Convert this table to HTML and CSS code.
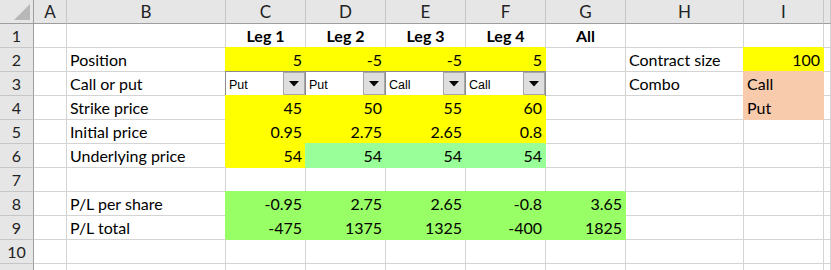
FILE: index.html
```html
<!DOCTYPE html>
<html>
<head>
<meta charset="utf-8">
<link rel="stylesheet" href="styles.css">
</head>
<body>
<div class="sheet">
  <!-- header row -->
  <div class="c corner"><svg width="16" height="16" viewBox="0 0 16 16"><polygon points="16,0 16,16 0,16" fill="#b8b8b8"/></svg></div>
  <div class="c hd">A</div><div class="c hd">B</div><div class="c hd">C</div><div class="c hd">D</div><div class="c hd">E</div><div class="c hd">F</div><div class="c hd">G</div><div class="c hd">H</div><div class="c hd">I</div><div class="c hd"></div>

  <!-- 1 -->
  <div class="c rh">1</div><div class="c"></div><div class="c"></div>
  <div class="c b">Leg 1</div><div class="c b">Leg 2</div><div class="c b">Leg 3</div><div class="c b">Leg 4</div><div class="c b">All</div>
  <div class="c"></div><div class="c"></div><div class="c"></div>

  <!-- 2 -->
  <div class="c rh">2</div><div class="c"></div><div class="c">Position</div>
  <div class="c r y">5</div><div class="c r y">-5</div><div class="c r y">-5</div><div class="c r y">5</div><div class="c"></div>
  <div class="c">Contract size</div><div class="c r y">100</div><div class="c"></div>

  <!-- 3 -->
  <div class="c rh">3</div><div class="c"></div><div class="c">Call or put</div>
  <div class="c dd-cell"><div class="dd"><span class="dd-text">Put</span><span class="dd-btn"><svg width="10" height="6" viewBox="0 0 10 6"><polygon points="0,0 10,0 5,5.5" fill="#000"/></svg></span></div></div>
  <div class="c dd-cell"><div class="dd"><span class="dd-text">Put</span><span class="dd-btn"><svg width="10" height="6" viewBox="0 0 10 6"><polygon points="0,0 10,0 5,5.5" fill="#000"/></svg></span></div></div>
  <div class="c dd-cell"><div class="dd"><span class="dd-text">Call</span><span class="dd-btn"><svg width="10" height="6" viewBox="0 0 10 6"><polygon points="0,0 10,0 5,5.5" fill="#000"/></svg></span></div></div>
  <div class="c dd-cell"><div class="dd"><span class="dd-text">Call</span><span class="dd-btn"><svg width="10" height="6" viewBox="0 0 10 6"><polygon points="0,0 10,0 5,5.5" fill="#000"/></svg></span></div></div>
  <div class="c"></div>
  <div class="c">Combo</div><div class="c s">Call</div><div class="c"></div>

  <!-- 4 -->
  <div class="c rh">4</div><div class="c"></div><div class="c">Strike price</div>
  <div class="c r y">45</div><div class="c r y">50</div><div class="c r y">55</div><div class="c r y">60</div><div class="c"></div>
  <div class="c"></div><div class="c s">Put</div><div class="c"></div>

  <!-- 5 -->
  <div class="c rh">5</div><div class="c"></div><div class="c">Initial price</div>
  <div class="c r y">0.95</div><div class="c r y">2.75</div><div class="c r y">2.65</div><div class="c r y">0.8</div><div class="c"></div>
  <div class="c"></div><div class="c"></div><div class="c"></div>

  <!-- 6 -->
  <div class="c rh">6</div><div class="c"></div><div class="c">Underlying price</div>
  <div class="c r y">54</div><div class="c r g">54</div><div class="c r g">54</div><div class="c r g">54</div><div class="c"></div>
  <div class="c"></div><div class="c"></div><div class="c"></div>

  <!-- 7 -->
  <div class="c rh">7</div><div class="c"></div><div class="c"></div>
  <div class="c"></div><div class="c"></div><div class="c"></div><div class="c"></div><div class="c"></div>
  <div class="c"></div><div class="c"></div><div class="c"></div>

  <!-- 8 -->
  <div class="c rh">8</div><div class="c"></div><div class="c">P/L per share</div>
  <div class="c r pl">-0.95</div><div class="c r pl">2.75</div><div class="c r pl">2.65</div><div class="c r pl">-0.8</div><div class="c r pl">3.65</div>
  <div class="c"></div><div class="c"></div><div class="c"></div>

  <!-- 9 -->
  <div class="c rh">9</div><div class="c"></div><div class="c">P/L total</div>
  <div class="c r pl">-475</div><div class="c r pl">1375</div><div class="c r pl">1325</div><div class="c r pl">-400</div><div class="c r pl">1825</div>
  <div class="c"></div><div class="c"></div><div class="c"></div>

  <!-- 10 -->
  <div class="c rh">10</div><div class="c"></div><div class="c"></div>
  <div class="c"></div><div class="c"></div><div class="c"></div><div class="c"></div><div class="c"></div>
  <div class="c"></div><div class="c"></div><div class="c"></div>

  <!-- 11 (partially visible) -->
  <div class="c rh"></div><div class="c"></div><div class="c"></div>
  <div class="c"></div><div class="c"></div><div class="c"></div><div class="c"></div><div class="c"></div>
  <div class="c"></div><div class="c"></div><div class="c"></div>
</div>
</body>
</html>
```
FILE: styles.css
```css
html, body {
  margin: 0;
  padding: 0;
  background: #fff;
}
body {
  font-family: Lato, "Open Sans", "Liberation Sans", sans-serif;
  font-size: 16px;
  color: #000;
  overflow: hidden;
  height: 270px;
}
.sheet {
  display: grid;
  grid-template-columns: 34px 33px 159px 80px 80px 80px 80px 80px 118px 80px 1fr;
  grid-auto-rows: 24px;
  width: 831px;
}
.c {
  box-sizing: border-box;
  border-right: 1px solid #d4d4d4;
  border-bottom: 1px solid #d4d4d4;
  padding: 0 3px 2px 3px;
  display: flex;
  align-items: flex-end;
  white-space: nowrap;
  overflow: hidden;
  line-height: 18px;
}
.hd {
  background: #e6e6e6;
  border-right-color: #c6c6c6;
  border-bottom-color: #9e9e9e;
  justify-content: center;
  align-items: center;
  padding: 0;
  font-size: 17px;
  color: #222;
}
.corner {
  background: #e6e6e6;
  border-right-color: #9e9e9e;
  border-bottom-color: #9e9e9e;
  padding: 0 3px 3px 0;
  justify-content: flex-end;
  align-items: flex-end;
}
.corner svg {
  display: block;
}
.rh {
  background: #e6e6e6;
  border-right-color: #9e9e9e;
  border-bottom-color: #c6c6c6;
  justify-content: center;
  align-items: center;
  padding: 0;
  font-size: 16px;
  color: #222;
}
.r { justify-content: flex-end; }
.b { justify-content: center; font-weight: bold; }
.y  { background: #ffff00; border-color: #ffff00; box-shadow: -1px -1px 0 #ffff00; }
.g  { background: #99ff99; border-color: #99ff99; box-shadow: -1px -1px 0 #99ff99; }
.pl { background: #99ff66; border-color: #99ff66; box-shadow: -1px -1px 0 #99ff66; }
.s  { background: #f8cbad; border-color: #f8cbad; box-shadow: -1px -1px 0 #f8cbad; }

.dd-cell {
  padding: 0;
  overflow: visible;
  align-items: stretch;
}
.dd {
  box-sizing: border-box;
  flex: 1;
  margin: -1px -1px -1px -1px;
  background: #fff;
  border: 1px solid #8c8c8c;
  display: flex;
  align-items: center;
}
.dd-text {
  flex: 1;
  padding-left: 3px;
  font-family: "Liberation Sans", Arial, sans-serif;
  font-size: 12.5px;
  line-height: 14px;
  padding-top: 3px;
}
.dd-btn {
  box-sizing: border-box;
  width: 22px;
  align-self: stretch;
  background: #dedede;
  border: 1px solid #a6a6a6;
  display: flex;
  align-items: center;
  justify-content: center;
}
.dd-btn svg { display: block; }
```
